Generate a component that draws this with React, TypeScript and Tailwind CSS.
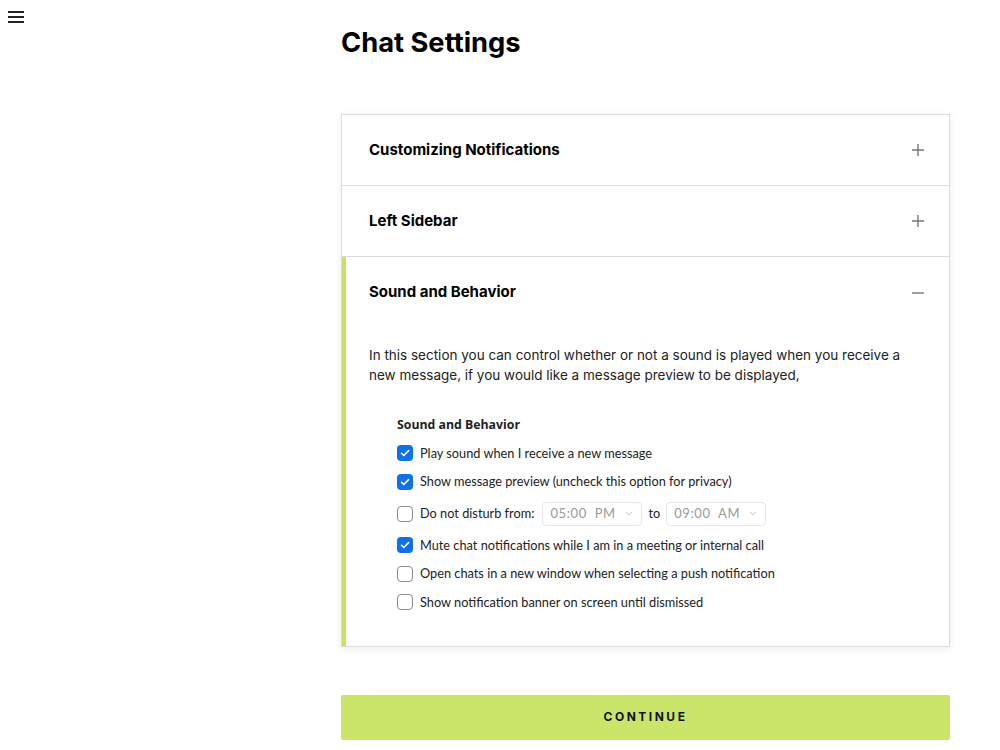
import { useState } from "react";

const heading = { fontFamily: "Inter, 'Liberation Sans', sans-serif" };
const zoomFont = { fontFamily: "Lato, 'Open Sans', sans-serif" };

const options = [
  { id: "play", label: "Play sound when I receive a new message", checked: true },
  { id: "preview", label: "Show message preview (uncheck this option for privacy)", checked: true },
  { id: "dnd", label: "Do not disturb from:", checked: false },
  { id: "mute", label: "Mute chat notifications while I am in a meeting or internal call", checked: true },
  { id: "open", label: "Open chats in a new window when selecting a push notification", checked: false },
  { id: "banner", label: "Show notification banner on screen until dismissed", checked: false },
];

function PlusIcon() {
  return (
    <svg width="14" height="14" viewBox="0 0 14 14" className="text-[#777]">
      <path d="M7 1v12M1 7h12" stroke="currentColor" strokeWidth="1.4" />
    </svg>
  );
}

function MinusIcon() {
  return (
    <svg width="14" height="14" viewBox="0 0 14 14" className="text-[#777]">
      <path d="M1 8h12" stroke="currentColor" strokeWidth="1.4" />
    </svg>
  );
}

function Box({ checked }: { checked: boolean }) {
  return checked ? (
    <span className="flex h-4 w-4 shrink-0 items-center justify-center rounded-[4px] bg-[#0e71eb]">
      <svg width="10" height="10" viewBox="0 0 10 10">
        <path d="M1.5 5.2l2.3 2.3L8.6 2.6" fill="none" stroke="white" strokeWidth="1.6" strokeLinecap="round" strokeLinejoin="round" />
      </svg>
    </span>
  ) : (
    <span className="h-4 w-4 shrink-0 rounded-[4px] border border-[#8a8a8a] bg-white" />
  );
}

function TimeSelect({ value }: { value: string }) {
  return (
    <span className="flex h-[24px] w-[100px] items-center justify-between rounded-[4px] border border-[#e6e6e6] pl-[7px] pr-[8px] text-[13px] text-[#9a9a9a]">
      <span className="whitespace-pre tracking-[0.6px]">{value}</span>
      <svg width="8" height="5" viewBox="0 0 8 5">
        <path d="M1 1l3 3 3-3" fill="none" stroke="#c8c8c8" strokeWidth="1" />
      </svg>
    </span>
  );
}

export default function App() {
  const [open, setOpen] = useState(2);
  const sections = ["Customizing Notifications", "Left Sidebar", "Sound and Behavior"];

  return (
    <div className="relative min-h-[750px] bg-white text-[#111]" style={heading}>
      <button className="absolute left-[8px] top-[11px] flex flex-col gap-[3px]">
        <span className="block h-[2px] w-[16px] bg-[#222]" />
        <span className="block h-[2px] w-[16px] bg-[#222]" />
        <span className="block h-[2px] w-[16px] bg-[#222]" />
      </button>

      <div className="ml-[341px] w-[609px] pt-[26px]">
        <h1 className="text-[27.3px] font-bold leading-[34px] text-black">Chat Settings</h1>

        <div className="mt-[54px] border border-[#dcdcdc] bg-white shadow-[0_2px_8px_rgba(0,0,0,0.08)]">
          {sections.map((title, i) => (
            <div key={title} className={i > 0 ? "border-t border-[#dcdcdc]" : ""}>
              <div className={open === i ? "border-l-4 border-[#c9e265]" : "border-l-4 border-transparent"}>
                <button
                  onClick={() => setOpen(open === i ? -1 : i)}
                  className="flex h-[70px] w-full items-center justify-between pl-[23px] pr-[24px] text-left"
                >
                  <span className="text-[15px] font-bold text-black">{title}</span>
                  {open === i ? <MinusIcon /> : <PlusIcon />}
                </button>

                {open === i && i === 2 && (
                  <div className="pb-[29px] pl-[23px] pr-[24px] pt-[18px]">
                    <p className="w-[545px] text-[13.5px] leading-[20px] text-[#222]">
                      In this section you can control whether or not a sound is played when you receive a new
                      message, if you would like a message preview to be displayed,
                    </p>

                    <div className="mt-[30px] pl-[28px] text-[12.75px] text-[#222]" style={zoomFont}>
                      <p className="mb-[4px] text-[12.3px] font-bold leading-[20px]" style={{ fontFamily: "'Open Sans', sans-serif" }}>
                        Sound and Behavior
                      </p>
                      <div className="flex flex-col">
                        {options.map((o) => (
                          <label
                            key={o.id}
                            className={`flex items-center gap-[7px] ${o.id === "dnd" ? "h-[35px]" : "h-[28.5px]"}`}
                          >
                            <Box checked={o.checked} />
                            <span className="whitespace-nowrap">{o.label}</span>
                            {o.id === "dnd" && (
                              <span className="ml-[1px] flex items-center gap-[6px]">
                                <TimeSelect value="05:00  PM" />
                                <span>to</span>
                                <TimeSelect value="09:00  AM" />
                              </span>
                            )}
                          </label>
                        ))}
                      </div>
                    </div>
                  </div>
                )}
              </div>
            </div>
          ))}
        </div>

        <button className="mt-[48px] flex h-[45px] w-full items-center justify-center rounded-[2px] bg-[#cbe56a] text-[12px] font-bold tracking-[2.5px] text-[#111]">
          CONTINUE
        </button>
      </div>
    </div>
  );
}
